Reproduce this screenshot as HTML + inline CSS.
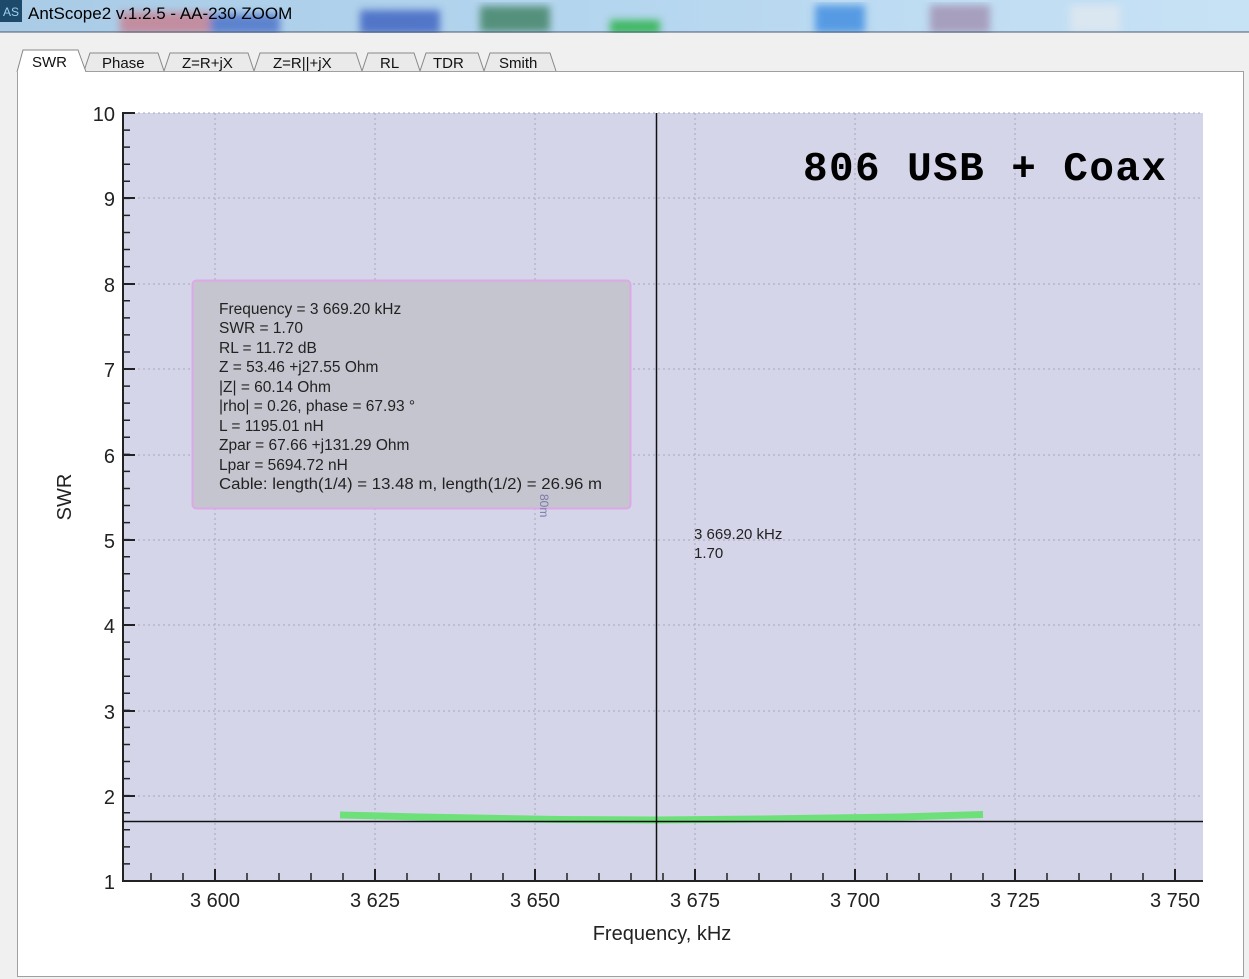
<!DOCTYPE html>
<html><head><meta charset="utf-8"><style>
html,body{margin:0;padding:0;width:1249px;height:979px;overflow:hidden;background:#f0f0f0;font-family:"Liberation Sans",sans-serif}
</style></head><body>
<svg width="1249" height="979" xmlns="http://www.w3.org/2000/svg" style="position:absolute;left:0;top:0">
<defs>
<linearGradient id="tb" x1="0" x2="1" y1="0" y2="0">
<stop offset="0" stop-color="#a9cbe6"/><stop offset="0.5" stop-color="#b5d6ef"/><stop offset="1" stop-color="#c8e2f5"/>
</linearGradient>
<filter id="bl"><feGaussianBlur stdDeviation="4"/></filter>
</defs>
<rect x="0" y="0" width="1249" height="32" fill="url(#tb)"/>
<g filter="url(#bl)" opacity="0.8">
<rect x="120" y="12" width="90" height="22" fill="#c87e8e"/>
<rect x="210" y="14" width="70" height="20" fill="#4a6fc8"/>
<rect x="360" y="10" width="80" height="24" fill="#3a5ec0"/>
<rect x="480" y="6" width="70" height="26" fill="#3c8060"/>
<rect x="610" y="20" width="50" height="14" fill="#22b040"/>
<rect x="815" y="5" width="50" height="28" fill="#3d8be0"/>
<rect x="930" y="5" width="60" height="28" fill="#a090b0"/>
<rect x="1070" y="5" width="50" height="28" fill="#e0e8f0"/>
</g>
<rect x="0" y="0" width="22" height="22" fill="#1d4a6a"/>
<text x="3" y="16" font-size="12" fill="#9fd0f0">AS</text>
<text x="28" y="19" font-size="17" fill="#000">AntScope2 v.1.2.5 - AA-230 ZOOM</text>
<line x1="0" y1="32" x2="1249" y2="32" stroke="#4a5a70" stroke-width="1"/>
<rect x="0" y="33" width="1249" height="946" fill="#f0f0f0"/>
<rect x="17.5" y="71.5" width="1226" height="905" fill="#fff" stroke="#a0a0a0"/>
<g stroke="#888">
<path d="M84 71 L90 53 L158 53 L164 71" fill="#eaeaea"/>
<path d="M164 71 L170 53 L248 53 L254 71" fill="#eaeaea"/>
<path d="M254 71 L260 53 L356 53 L362 71" fill="#eaeaea"/>
<path d="M362 71 L368 53 L414 53 L420 71" fill="#eaeaea"/>
<path d="M420 71 L426 53 L478 53 L484 71" fill="#eaeaea"/>
<path d="M484 71 L490 53 L550 53 L556 71" fill="#eaeaea"/>
<path d="M17 72 L23 50 L78 50 L86 72" fill="#fff"/>
</g>
<g font-size="15" fill="#111">
<text x="32" y="67">SWR</text>
<text x="102" y="68">Phase</text>
<text x="182" y="68">Z=R+jX</text>
<text x="273" y="68">Z=R||+jX</text>
<text x="380" y="68">RL</text>
<text x="433" y="68">TDR</text>
<text x="499" y="68">Smith</text>
</g>
<rect x="123" y="113" width="1080" height="768" fill="#d5d5e9"/>
<g stroke="#a8a8b8" stroke-dasharray="2 3" stroke-width="1">
<line x1="215" y1="113" x2="215" y2="881"/><line x1="375" y1="113" x2="375" y2="881"/>
<line x1="535" y1="113" x2="535" y2="881"/><line x1="695" y1="113" x2="695" y2="881"/>
<line x1="855" y1="113" x2="855" y2="881"/><line x1="1015" y1="113" x2="1015" y2="881"/>
<line x1="1175" y1="113" x2="1175" y2="881"/>
<line x1="123" y1="113" x2="1203" y2="113"/><line x1="123" y1="198" x2="1203" y2="198"/>
<line x1="123" y1="284" x2="1203" y2="284"/><line x1="123" y1="369" x2="1203" y2="369"/>
<line x1="123" y1="455" x2="1203" y2="455"/><line x1="123" y1="540" x2="1203" y2="540"/>
<line x1="123" y1="625" x2="1203" y2="625"/><line x1="123" y1="711" x2="1203" y2="711"/>
<line x1="123" y1="796" x2="1203" y2="796"/>
</g>
<g stroke="#222" stroke-width="2">
<line x1="123" y1="112" x2="123" y2="882"/>
<line x1="122" y1="881" x2="1203" y2="881"/>
</g>
<!-- minor ticks -->
<line x1="126.5" y1="881.75" x2="126.5" y2="112" stroke="#222" stroke-width="7" stroke-dasharray="1.5 15.566"/>
<line x1="150.25" y1="877" x2="1203" y2="877" stroke="#222" stroke-width="8" stroke-dasharray="1.5 30.5"/>
<!-- major ticks -->
<g stroke="#222" stroke-width="2">
<line x1="123" y1="113" x2="135" y2="113"/><line x1="123" y1="198" x2="135" y2="198"/>
<line x1="123" y1="284" x2="135" y2="284"/><line x1="123" y1="369" x2="135" y2="369"/>
<line x1="123" y1="455" x2="135" y2="455"/><line x1="123" y1="540" x2="135" y2="540"/>
<line x1="123" y1="625" x2="135" y2="625"/><line x1="123" y1="711" x2="135" y2="711"/>
<line x1="123" y1="796" x2="135" y2="796"/>
<line x1="215" y1="869" x2="215" y2="881"/><line x1="375" y1="869" x2="375" y2="881"/>
<line x1="535" y1="869" x2="535" y2="881"/><line x1="695" y1="869" x2="695" y2="881"/>
<line x1="855" y1="869" x2="855" y2="881"/><line x1="1015" y1="869" x2="1015" y2="881"/>
<line x1="1175" y1="869" x2="1175" y2="881"/>
</g>
<g font-size="20" fill="#222" text-anchor="end">
<text x="115" y="121">10</text><text x="115" y="206">9</text><text x="115" y="292">8</text>
<text x="115" y="377">7</text><text x="115" y="463">6</text><text x="115" y="548">5</text>
<text x="115" y="633">4</text><text x="115" y="719">3</text><text x="115" y="804">2</text>
<text x="115" y="889">1</text>
</g>
<g font-size="20" fill="#222" text-anchor="middle">
<text x="215" y="907">3 600</text><text x="375" y="907">3 625</text><text x="535" y="907">3 650</text>
<text x="695" y="907">3 675</text><text x="855" y="907">3 700</text><text x="1015" y="907">3 725</text>
<text x="1175" y="907">3 750</text>
<text x="662" y="940">Frequency, kHz</text>
</g>
<text x="0" y="0" font-size="20" fill="#222" text-anchor="middle" transform="translate(71,497) rotate(-90)">SWR</text>
<rect x="192.5" y="280.5" width="438" height="228" rx="4" fill="#c5c5d0" stroke="#dca8e6" stroke-width="2"/>
<g font-size="15.5" fill="#222">
<text x="219" y="314">Frequency = 3 669.20 kHz</text>
<text x="219" y="333">SWR = 1.70</text>
<text x="219" y="353">RL = 11.72 dB</text>
<text x="219" y="372">Z = 53.46 +j27.55 Ohm</text>
<text x="219" y="392">|Z| = 60.14 Ohm</text>
<text x="219" y="411">|rho| = 0.26, phase = 67.93 °</text>
<text x="219" y="431">L = 1195.01 nH</text>
<text x="219" y="450">Zpar = 67.66 +j131.29 Ohm</text>
<text x="219" y="470">Lpar = 5694.72 nH</text>
<text x="219" y="489" textLength="383" lengthAdjust="spacingAndGlyphs">Cable: length(1/4) = 13.48 m, length(1/2) = 26.96 m</text>
</g>
<text x="0" y="0" font-size="12" fill="#7a7aa8" transform="translate(540,494) rotate(90)">80m</text>
<path d="M340 815 L420 817 L560 819.5 L656 820 L760 819 L900 817 L983 814.5" stroke="#6ee07a" stroke-width="7" fill="none"/>
<line x1="656.5" y1="113" x2="656.5" y2="881" stroke="#111" stroke-width="1.5"/>
<line x1="123" y1="821.5" x2="1203" y2="821.5" stroke="#111" stroke-width="1.5"/>
<g font-size="15" fill="#222"><text x="694" y="539">3 669.20 kHz</text><text x="694" y="558">1.70</text></g>
<text x="803" y="180" font-family="Liberation Mono,monospace" font-weight="bold" font-size="41" fill="#000" textLength="363">806 USB + Coax</text>
</svg>
</body></html>
